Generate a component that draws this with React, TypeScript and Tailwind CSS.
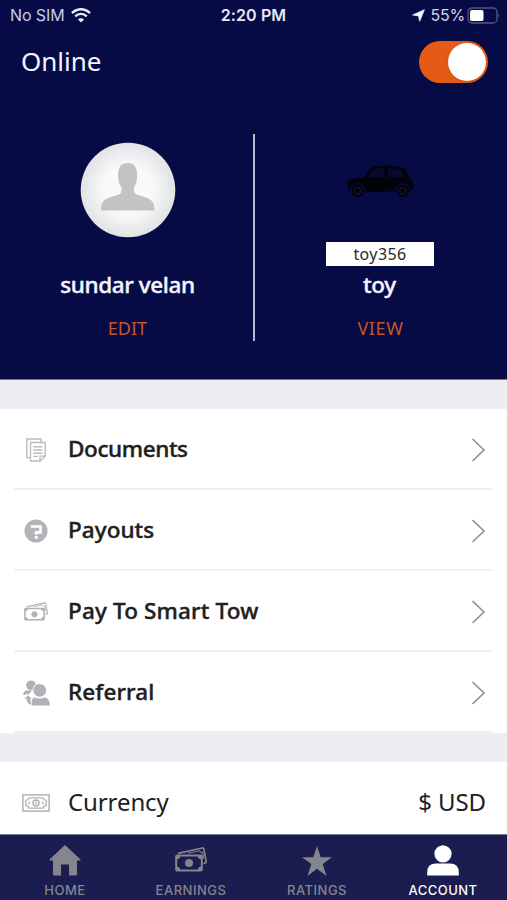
import type { ReactNode } from 'react';

function Wifi() {
  return (
    <svg viewBox="0 0 20 15" className="h-[15px] w-5" fill="none" stroke="#e9ebfb">
      <path d="M1 5.2C6-.1 14-.1 19 5.2" strokeWidth="2.5" />
      <path d="M4.2 8.4c3.3-3.3 8.3-3.3 11.6 0" strokeWidth="2.4" />
      <path d="M10 14.6 6.9 11.4c1.8-1.6 4.4-1.6 6.2 0Z" fill="#e9ebfb" stroke="none" />
    </svg>
  );
}

function StatusBar() {
  return (
    <div className="grid h-[30px] grid-cols-3 items-center pl-[10px] pr-[7px] font-['Inter','Liberation_Sans',sans-serif] text-[#e6e8fa]">
      <div className="flex items-center gap-[6px]">
        <span className="whitespace-nowrap text-[16px] tracking-[-0.1px] text-[#c9cce6]">No SIM</span>
        <Wifi />
      </div>
      <span className="-ml-[3px] text-center text-[16px] font-semibold tracking-[0.1px]">2:20 PM</span>
      <div className="flex items-center justify-end">
        <svg viewBox="0 0 13 13" className="mr-[5px] h-[13px] w-[13px]" fill="#f5f6ff" stroke="#f5f6ff" strokeWidth=".7" strokeLinejoin="round">
          <path d="M12.400.7 7.700 12.300 6.500 6.900.6 6Z" />
        </svg>
        <span className="text-[16px] tracking-[-0.2px] text-[#d1d4ec]">55%</span>
        <svg viewBox="0 0 33 17" className="ml-[2px] h-[17px] w-[33px]">
          <rect x="1" y="1" width="29" height="15" rx="4" fill="none" stroke="#53577f" strokeWidth="1.3" />
          <rect x="3" y="3" width="13.5" height="11" rx="1.8" fill="#fff" />
          <path d="M31.5 6q1.500 2.500 0 5Z" fill="#53577f" />
        </svg>
      </div>
    </div>
  );
}

function Avatar() {
  return (
    <svg viewBox="0 0 96 96" className="h-24 w-24">
      <defs>
        <radialGradient id="avatar">
          <stop offset="0.5" stopColor="#fafafa" />
          <stop offset="1" stopColor="#e0e2e4" />
        </radialGradient>
      </defs>
      <circle cx="48" cy="48" r="47.3" fill="url(#avatar)" />
      <path
        d="M21 68.500c0-9 2.500-10.500 10-13.500 6-2.300 10.500-2 10.500-6.500v-3.500c-2.500-2.500-3.400-6-3.500-11.500C37.900 25.500 41 21 47.500 21S57.300 25.500 57.200 33.500c-.1 5.500-1.200 9-3.200 11.500v3.500c0 4.500 4.500 4.200 10.500 6.500 7.500 3 10 4.500 10 13.500Z"
        fill="#c3c3c3"
      />
    </svg>
  );
}

function Car() {
  return (
    <svg viewBox="0 0 68 34" className="h-[34px] w-[68px]">
      <path
        d="M1 25 .7 18.500Q.5 15.500 3 14.800L18 11.500 22.500 4.500Q24 2 28 1.500 42 0 54 2q3 .4 4.500 3l4.500 9q3.500 2 4 9l-3 2.500-47 2Z"
        fill="#02020a"
      />
      <path d="M20.500 12 24.800 5.500Q26 3.700 28.500 3.600L37 3.200 38 12ZM40 3.200 52 3.700q2 .2 3 2L58.500 12H40.600Z" fill="#07082a" />
      {[10.5, 56].map((cx) => (
        <g key={cx}>
          <circle cx={cx} cy="25.500" r="7.300" fill="#080b42" />
          <circle cx={cx} cy="25.800" r="6.200" fill="#02020a" />
          <circle cx={cx} cy="25.800" r="3.300" fill="none" stroke="#15173a" strokeWidth="1.2" />
        </g>
      ))}
    </svg>
  );
}

function Documents() {
  return (
    <svg viewBox="0 0 20 24" className="h-6 w-5" fill="none" stroke="#bcbcc0" strokeWidth="1.400">
      <path d="M4.500 19.600H.8V1H15v3.500" />
      <path d="M4.500 4.500h14.700v13.700l-5 4.800H4.500Z" />
      <path d="M14 23v-4.900h5M7.300 8.800h9M7.300 12h9M7.300 15.200h9M7.300 18.400H12" />
    </svg>
  );
}

function Question() {
  return (
    <svg viewBox="0 0 24 24" className="h-6 w-6">
      <circle cx="12" cy="12" r="11.500" fill="#b4b4b8" />
      <path d="M6.800 7.500h9.700v5.800h-4.300v2.500" fill="none" stroke="#fff" strokeWidth="2.700" />
      <rect x="10.800" y="17" width="2.900" height="2.700" fill="#fff" />
    </svg>
  );
}

function Cash({ className }: { className: string }) {
  return (
    <svg viewBox="0 0 32 25" className={className}>
      <path d="M3 6.300 27.300 1q1.200-.2 1.500 1L31.200 14.500q.1 1.200-1.200 1.500l-1.500.4" fill="none" stroke="currentColor" strokeWidth="1.700" />
      <path d="M13 6.200 24.500 3.800q.8 2 3 1.800l1.200 6" fill="none" stroke="currentColor" strokeWidth="1.100" />
      <path
        fillRule="evenodd"
        d="M2 7.600h24q1.800 0 1.800 1.800v13.300q0 1.800-1.800 1.800H2Q.2 24.500.2 22.700V9.400Q.2 7.600 2 7.600ZM5 9.600q0 2.600-2.800 2.600v7.600q2.800 0 2.800 2.700h18q0-2.700 2.800-2.700v-7.600Q23 12.200 23 9.600Z"
        fill="currentColor"
      />
      <circle cx="14" cy="16" r="4" fill="currentColor" />
    </svg>
  );
}

function People() {
  return (
    <svg viewBox="0 0 27 26" className="h-[26px] w-[27px]" fill="#b2b2b6">
      <circle cx="8" cy="5.300" r="4.900" />
      <path d="M0 14.500Q.8 10.500 4.500 10.300l4.500.4-4 4.300-2-1.800-.6 1.800ZM1.200 18.600l3.600-3.100 4 3-1.500.6 1 6Q3.500 23.300 3.500 18.600Z" />
      <path d="M9 25.500Q8 19 11 17.200q5.700 2.600 11 0 5 2 4.800 8.300Z" />
      <circle cx="16.700" cy="10.300" r="7.100" fill="#fff" />
      <circle cx="16.700" cy="10.300" r="6.400" />
    </svg>
  );
}

function Banknote() {
  return (
    <svg viewBox="0 0 28 18" className="h-[18px] w-7" fill="none" stroke="#b2b2b4">
      <rect x=".9" y=".9" width="26.200" height="16.200" strokeWidth="1.500" />
      <path d="M7 3.800h14q.5 2.300 3.200 2.700v5q-2.700.4-3.200 2.700H7q-.5-2.300-3.200-2.700v-5Q6.500 6.100 7 3.800Z" strokeWidth="1.300" />
      <circle cx="14" cy="9" r="3" strokeWidth="1.500" />
      <path d="M14 7.500v3M7 7.500v3M21 7.500v3" strokeWidth="1.300" />
    </svg>
  );
}

function MenuRow({ icon, label, tracking }: { icon: ReactNode; label: string; tracking: string }) {
  return (
    <div className="mx-[14px] flex h-[81px] items-center border-b-2 border-[#f1f1f3] pl-2 pr-[7px] pt-[2px]">
      <span className="flex w-7 justify-center text-[#b2b2b6]">{icon}</span>
      <span className={`mb-[2px] ml-[18px] flex-1 text-[22.5px] font-medium leading-8 [-webkit-text-stroke:0.4px_#202020] ${tracking}`}>{label}</span>
      <svg viewBox="0 0 15 24" className="h-6 w-[15px]" fill="none" stroke="#8a8a8c" strokeWidth="1.500">
        <path d="M1.500 1 13 12 1.500 23" />
      </svg>
    </div>
  );
}

function Tab({ icon, label, active = false }: { icon: ReactNode; label: string; active?: boolean }) {
  return (
    <div className={`flex w-[126px] flex-col items-center ${active ? 'text-white' : 'text-[#85868d]'}`}>
      <span className="flex h-[45px] items-end pb-[5px]">{icon}</span>
      <span className="font-['Inter','Liberation_Sans',sans-serif] text-[13px] font-medium leading-[18px] tracking-[0.5px]">{label}</span>
    </div>
  );
}

export default function App() {
  return (
    <div className="flex h-[900px] w-[507px] flex-col overflow-hidden bg-[#eeedf2] font-['Noto_Sans','Open_Sans',sans-serif] text-[#202020]">
      <header className="h-[380px] shrink-0 border-b border-[#777aa2] bg-[#070b45] text-[#f3f5ff]">
        <StatusBar />
        <div className="flex h-[64px] items-center justify-between pl-[21px] pr-[19px]">
          <h1 className="mb-[2px] text-[26px] leading-[34px]">Online</h1>
          <div className="flex h-[42px] w-[69px] items-center justify-end rounded-full bg-[#e55b16] pr-[2px]">
            <span className="h-[38px] w-[38px] rounded-full bg-white shadow-sm" />
          </div>
        </div>
        <div className="mt-10 flex h-[207px]">
          <section className="flex w-[253px] flex-col items-center pl-[2px] pt-[8px]">
            <Avatar />
            <h2 className="mt-[31px] text-[22.5px] font-medium leading-8 tracking-[-0.4px] [-webkit-text-stroke:0.4px_#f3f5ff]">sundar velan</h2>
            <span className="mt-[14px] text-[18px] leading-[26px] text-[#c5552a]">EDIT</span>
          </section>
          <div className="w-[2px] bg-[#b5b7ce]" />
          <section className="flex flex-1 flex-col items-center pt-[31px]">
            <Car />
            <span className="mr-[2px] mt-[43px] flex h-[24px] w-[108px] items-center justify-center bg-white text-[16px] tracking-[0.4px] text-[#282828]">toy356</span>
            <h2 className="mr-[3px] mt-[3px] text-[22.5px] font-medium leading-8 tracking-[-0.3px] [-webkit-text-stroke:0.4px_#f3f5ff]">toy</h2>
            <span className="mr-[1px] mt-[14px] text-[18px] leading-[26px] tracking-[0.6px] text-[#c5552a]">VIEW</span>
          </section>
        </div>
      </header>

      <main className="mt-[29px] h-[324px] shrink-0 bg-white">
        <MenuRow icon={<Documents />} label="Documents" tracking="tracking-[-0.4px]" />
        <MenuRow icon={<Question />} label="Payouts" tracking="tracking-[0.05px]" />
        <MenuRow icon={<Cash className="h-[19px] w-6" />} label="Pay To Smart Tow" tracking="tracking-[0.15px]" />
        <MenuRow icon={<People />} label="Referral" tracking="tracking-[0.1px]" />
      </main>

      <div className="mt-[29px] flex h-[72px] shrink-0 items-center bg-white pl-[22px] pr-[21px] pt-[9px] text-[24px]">
        <Banknote />
        <span className="mb-[2px] ml-[18px] flex-1 tracking-[-0.1px]">Currency</span>
        <span className="mb-[2px] tracking-[-0.1px]">$ USD</span>
      </div>

      <nav className="flex h-[66px] shrink-0 border-t border-[#777999] bg-[#1b1c50] pl-[2px] pt-px">
        <Tab
          label="HOME"
          icon={
            <svg viewBox="0 0 32 31" className="h-[31px] w-8" fill="currentColor">
              <path d="M16 0 31.500 14.500q.5 1-1 1H28V29.500q0 1-1 1h-7V19.500h-8v11H5q-1 0-1-1v-14H1.500q-1.500 0-1-1Z" />
            </svg>
          }
        />
        <Tab label="EARNINGS" icon={<span className="pb-1"><Cash className="h-[25px] w-8" /></span>} />
        <Tab
          label="RATINGS"
          icon={
            <svg viewBox="0 0 30 30" className="h-[30px] w-[30px]" fill="currentColor">
              <path d="m15 0 3.700 11.300H30l-9.300 6.800L24.500 30 15 22.700 5.500 30l3.800-11.900L0 11.300h11.300Z" />
            </svg>
          }
        />
        <Tab
          active
          label="ACCOUNT"
          icon={
            <svg viewBox="0 0 32 31" className="h-[31px] w-8" fill="currentColor">
              <circle cx="16" cy="8.800" r="8.600" />
              <path d="M.2 30.500v-3Q.2 18.500 9 18.500h14q8.800 0 8.800 9v3Z" />
            </svg>
          }
        />
      </nav>
    </div>
  );
}
